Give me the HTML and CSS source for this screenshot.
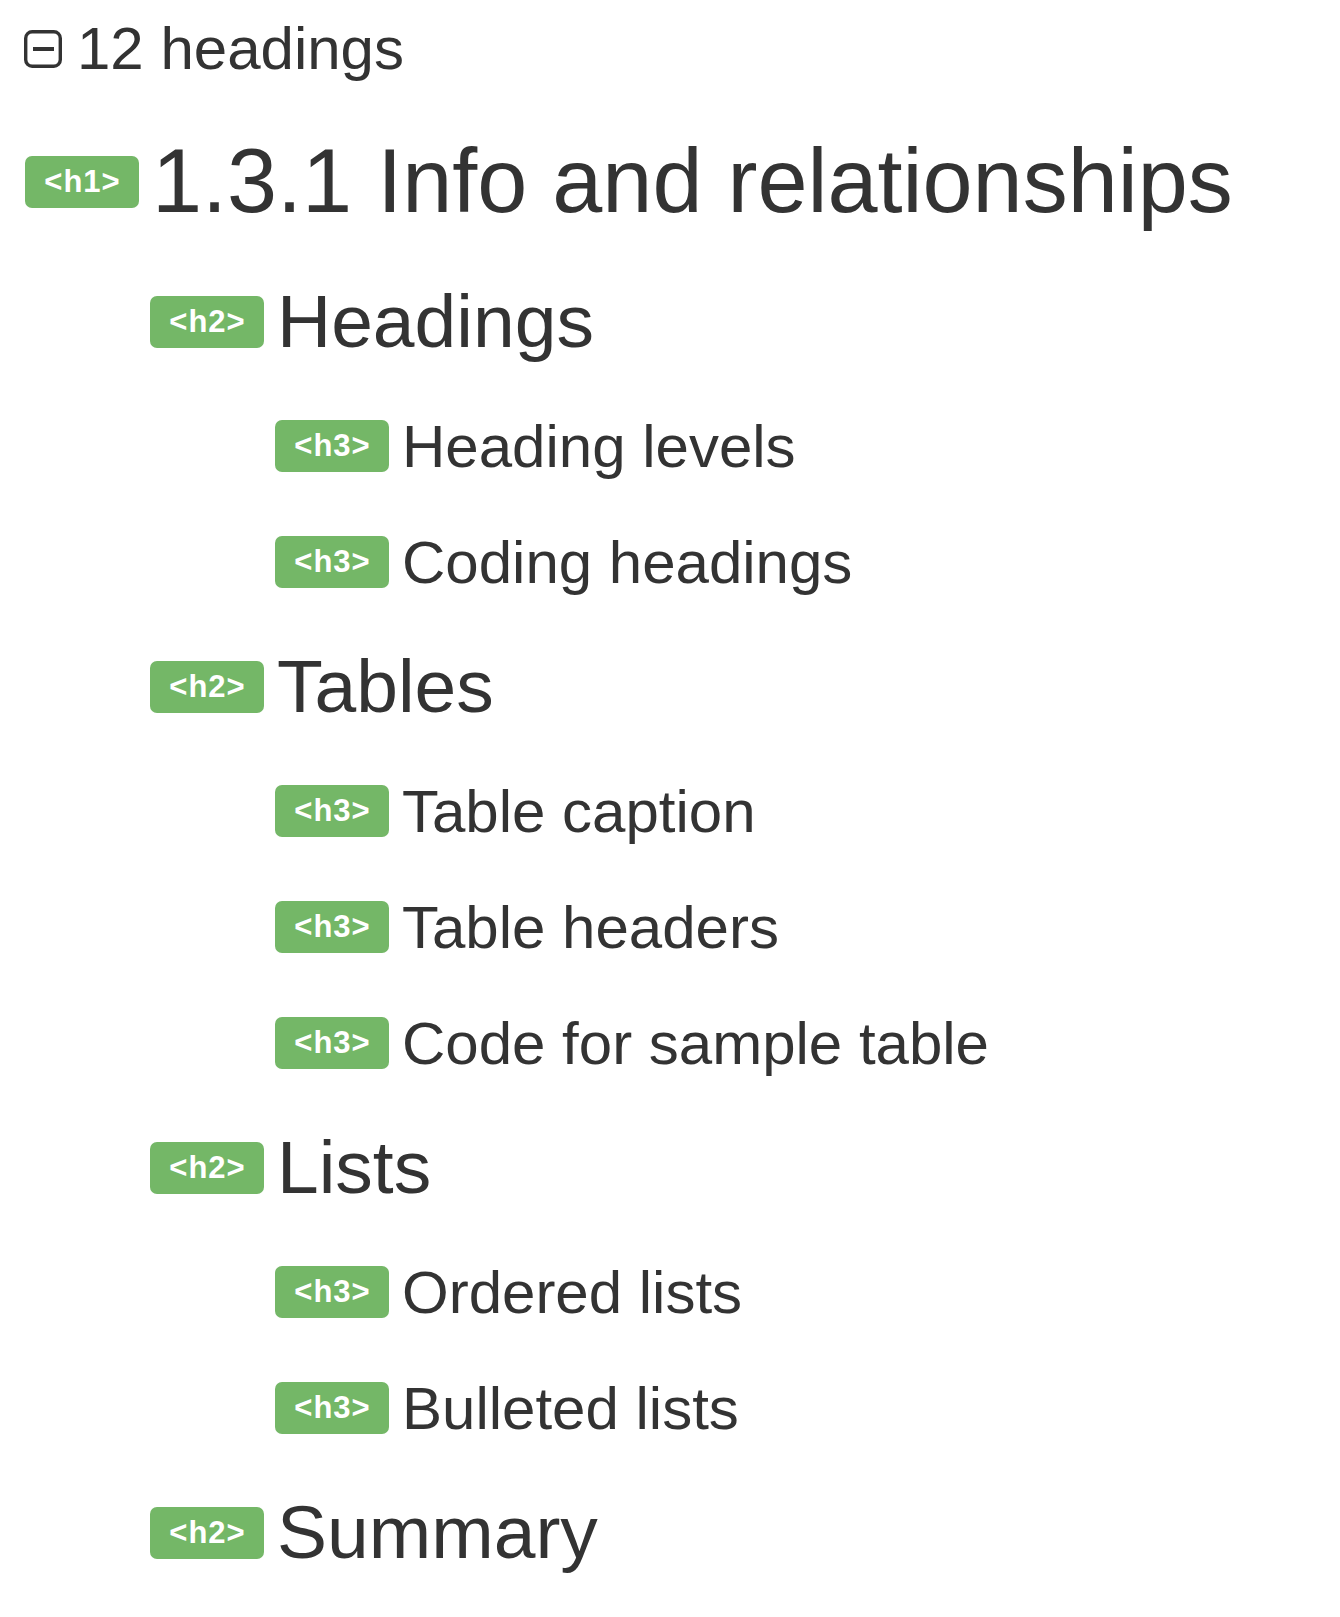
FILE: index.html
```html
<!DOCTYPE html>
<html lang="en">
<head>
    <meta charset="UTF-8">
    <meta name="viewport" content="width=device-width, initial-scale=1.0">
    <title>Headings outline</title>
    <link rel="stylesheet" href="styles.css">
</head>
<body>
    <!-- Toggle -->
    <div class="toggle">
        <svg class="toggle-icon" width="38" height="38" viewBox="0 0 38 38">
            <rect x="1.7" y="1.7" width="34.6" height="34.6" rx="6.5" fill="none" stroke="#333" stroke-width="3.4"/>
            <line x1="9" y1="19" x2="30" y2="19" stroke="#333" stroke-width="4"/>
        </svg>
        <span>12 headings</span>
    </div>

    <!-- Outline -->
    <ul class="outline">
        <li class="lvl1"><span class="tag">&lt;h1&gt;</span><span class="title">1.3.1 Info and relationships</span></li>
        <li class="lvl2"><span class="tag">&lt;h2&gt;</span><span class="title">Headings</span></li>
        <li class="lvl3"><span class="tag">&lt;h3&gt;</span><span class="title">Heading levels</span></li>
        <li class="lvl3"><span class="tag">&lt;h3&gt;</span><span class="title">Coding headings</span></li>
        <li class="lvl2"><span class="tag">&lt;h2&gt;</span><span class="title">Tables</span></li>
        <li class="lvl3"><span class="tag">&lt;h3&gt;</span><span class="title">Table caption</span></li>
        <li class="lvl3"><span class="tag">&lt;h3&gt;</span><span class="title">Table headers</span></li>
        <li class="lvl3"><span class="tag">&lt;h3&gt;</span><span class="title">Code for sample table</span></li>
        <li class="lvl2"><span class="tag">&lt;h2&gt;</span><span class="title">Lists</span></li>
        <li class="lvl3"><span class="tag">&lt;h3&gt;</span><span class="title">Ordered lists</span></li>
        <li class="lvl3"><span class="tag">&lt;h3&gt;</span><span class="title">Bulleted lists</span></li>
        <li class="lvl2"><span class="tag">&lt;h2&gt;</span><span class="title">Summary</span></li>
    </ul>
</body>
</html>
```

FILE: styles.css
```css
body { margin: 0; padding: 0 24px; font-family: "Liberation Sans", Arial, sans-serif; color: #333; background: #fff; }
.toggle { display: flex; align-items: center; gap: 15px; height: 96px; margin-bottom: 12px; font-size: 60px; }
.toggle-icon { flex: none; margin-top: 2px; }
.outline { list-style: none; margin: 0; padding: 0; }
.outline li { display: flex; align-items: center; gap: 13px; white-space: nowrap; }
.tag { flex: none; display: flex; align-items: center; justify-content: center; width: 114px; height: 52px; margin-left: 1px; padding-left: 1px; box-sizing: border-box; border-radius: 7px; background: #74b767; color: #fff; font-weight: bold; font-size: 31px; letter-spacing: 1px; }
.lvl1 { height: 147px; font-size: 90px; }
.lvl2 { height: 133px; padding-left: 125px; font-size: 75px; }
.lvl3 { height: 116px; padding-left: 250px; font-size: 60px; }
.title { line-height: 1.15; }
```
